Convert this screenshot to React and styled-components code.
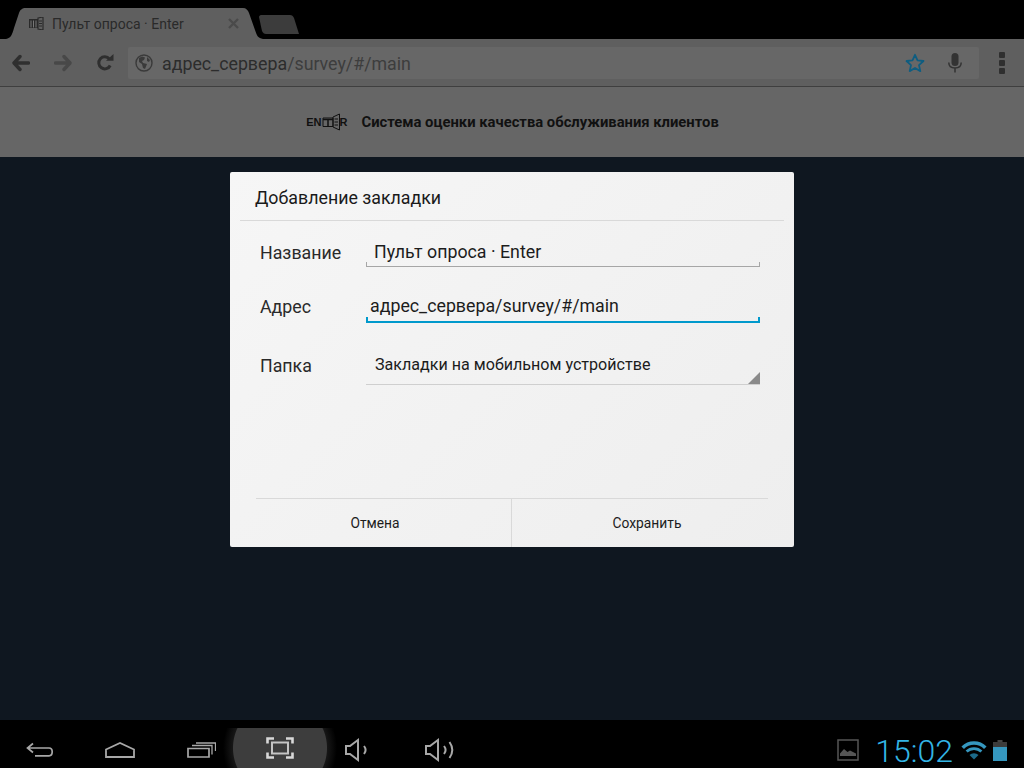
import React from 'react';
import styled, { createGlobalStyle } from 'styled-components';

const GlobalStyle = createGlobalStyle`
  html, body {
    margin: 0;
    padding: 0;
    background: #000;
  }
  * {
    box-sizing: border-box;
  }
`;

const Screen = styled.div`
  width: 1024px;
  height: 768px;
  display: flex;
  flex-direction: column;
  overflow: hidden;
  font-family: Roboto, "Liberation Sans", sans-serif;
  background: #0f1720;
`;

const TabStrip = styled.div`
  height: 39px;
  flex: none;
  background: #000;
  display: flex;
  align-items: flex-end;
`;

const Tab = styled.div`
  width: 263px;
  height: 31px;
  flex: none;
  background: #5f5f5f;
  clip-path: path('M6 31 C11 30 12 27 14 20 L19 5 C20 2 22 0 26 0 L243 0 C246 0 248 2 249 5 L255 22 C257 28 258 30 263 31 Z');
  display: flex;
  align-items: center;
  padding: 0 0 0 28px;
  color: #2a2a2a;
  font-size: 14px;
`;

const TabTitle = styled.span`
  margin-left: 8px;
  width: 176px;
  white-space: nowrap;
`;

const NewTab = styled.div`
  width: 41px;
  height: 19px;
  margin: 0 0 5px -4px;
  background: #3c3c3c;
  clip-path: path('M0 2 C0 1 1 0 2 0 L31 0 C33 0 34 1 35 3 L40 19 L7 19 C5 19 4 18 3 16 Z');
`;

const Toolbar = styled.div`
  height: 48px;
  flex: none;
  background: #5f5f5f;
  border-bottom: 1px solid #3f3f3f;
  display: flex;
  align-items: center;
  padding: 0 0 0 12px;
`;

const NavButton = styled.div`
  width: ${(props) => props.$w}px;
  flex: none;
  display: flex;
  align-items: center;
`;

const AddressBar = styled.div`
  width: 851px;
  height: 32px;
  flex: none;
  margin: 1px 0 0 0;
  background: #676767;
  border-radius: 2px;
  display: flex;
  align-items: center;
  padding: 0 17px 0 7px;
`;

const AddressText = styled.span`
  flex: 1;
  margin-left: 9px;
  padding-top: 1px;
  font-size: 17.8px;
  color: #2c2c2c;
  white-space: nowrap;
`;

const AddressDim = styled.span`
  color: #3d3d3d;
`;

const MenuDots = styled.div`
  margin-left: 20px;
  display: flex;
  flex-direction: column;
  gap: 2px;
`;

const MenuDot = styled.i`
  display: block;
  width: 6px;
  height: 6px;
  background: #2f2f2f;
  border-radius: 1px;
`;

const PageHeader = styled.div`
  height: 70px;
  flex: none;
  background: #666;
  display: flex;
  align-items: center;
  justify-content: center;
  gap: 14px;
  padding: 0 0 1px 1px;
`;

const Logo = styled.div`
  display: flex;
  align-items: center;
  font-family: "Liberation Sans", sans-serif;
  font-weight: 700;
  font-size: 11px;
  color: #111;
`;

const HeaderTitle = styled.div`
  font-size: 14.8px;
  font-weight: 700;
  color: #111;
  white-space: nowrap;
`;

const Content = styled.div`
  flex: 1;
  background: #0f1720;
  padding: 15px 0 0 230px;
`;

const Dialog = styled.div`
  width: 564px;
  height: 375px;
  background: linear-gradient(135deg, #f6f6f6, #eeeeee);
  border-radius: 2px;
  display: flex;
  flex-direction: column;
`;

const DialogTitle = styled.div`
  height: 49px;
  flex: none;
  margin: 0 10px;
  padding: 2px 0 0 15px;
  border-bottom: 1px solid #d9d9d9;
  display: flex;
  align-items: center;
  font-size: 17.8px;
  color: #1a1a1a;
`;

const Form = styled.div`
  flex: 1;
  padding: 3px 34px 0 30px;
  display: flex;
  flex-direction: column;
`;

const Row = styled.div`
  height: ${(props) => props.$h}px;
  flex: none;
  display: flex;
  align-items: center;
`;

const Label = styled.div`
  width: 106px;
  flex: none;
  font-size: 17.8px;
  color: #2a2a2a;
`;

const Field = styled.div`
  position: relative;
  flex: 1;
  height: ${(props) => (props.$focus ? 32 : 30)}px;
  display: flex;
  align-items: center;
  padding-left: ${(props) => props.$pad}px;
  font-size: 17.8px;
  color: #1c1c1c;
  white-space: nowrap;
  border-bottom: ${(props) => (props.$focus ? '2px solid #0099cc' : '1px solid #a6a6a6')};
  &::before,
  &::after {
    content: '';
    position: absolute;
    bottom: 0;
    width: ${(props) => (props.$focus ? 2 : 1)}px;
    height: 4px;
    background: ${(props) => (props.$focus ? '#0099cc' : '#a6a6a6')};
  }
  &::before {
    left: 0;
  }
  &::after {
    right: 0;
  }
`;

const Select = styled.div`
  position: relative;
  flex: 1;
  height: 40px;
  display: flex;
  align-items: center;
  padding: 0 0 0 9px;
  font-size: 16.1px;
  color: #1c1c1c;
  border-bottom: 1px solid #cfcfcf;
  &::after {
    content: '';
    position: absolute;
    right: 0;
    bottom: 0;
    border-style: solid;
    border-width: 0 0 12px 12px;
    border-color: transparent transparent #8a8a8a transparent;
  }
`;

const Footer = styled.div`
  height: 49px;
  flex: none;
  margin: 0 26px 0 26px;
  border-top: 1px solid #d9d9d9;
  display: flex;
`;

const FooterButton = styled.div`
  flex: ${(props) => (props.$first ? '0 0 256px' : '1')};
  display: flex;
  align-items: center;
  justify-content: center;
  padding: ${(props) => (props.$first ? '0 17px 0 0' : '0 0 0 14px')};
  font-size: 13.8px;
  color: #1c1c1c;
  border-right: ${(props) => (props.$first ? '1px solid #d9d9d9' : 'none')};
`;

const SystemBar = styled.div`
  height: 48px;
  flex: none;
  background: #000;
  display: flex;
  align-items: center;
  padding: 12px 0 0 26px;
`;

const SysIcon = styled.div`
  width: ${(props) => props.$w}px;
  flex: none;
  display: flex;
  align-items: center;
`;

const HighlightButton = styled.div`
  width: 114px;
  height: 40px;
  align-self: flex-end;
  margin-right: 8px;
  flex: none;
  background: radial-gradient(circle at 57px 20px, #3d3d3d 0, #3d3d3d 46.5px, #161616 47.5px, #000 57px);
  display: flex;
  align-items: center;
  justify-content: center;
`;

const StatusArea = styled.div`
  margin-left: auto;
  display: flex;
  align-items: center;
  padding-right: 17px;
`;

const Clock = styled.div`
  font-size: 32px;
  font-weight: 300;
  color: #33b5e5;
  margin: 2px 8px 0 16px;
  line-height: 1;
`;

const FavIcon = () => (
  <svg width="16" height="13" viewBox="0 0 16 13" fill="none">
    <path d="M1 2h9v9H1z" fill="#2a2a2a" />
    <path d="M3 3.500v7M5.500 3.500v7M8 3.500v7" stroke="#777" strokeWidth="1" />
    <path d="M10 1l5-1v13l-5-1z" fill="none" stroke="#2a2a2a" strokeWidth="1.200" />
    <path d="M11 4h3M11 6.500h3M11 9h3" stroke="#2a2a2a" strokeWidth="1" />
  </svg>
);

const CloseIcon = () => (
  <svg width="11" height="11" viewBox="0 0 11 11">
    <path d="M1 1l9 9M10 1l-9 9" stroke="#4a4a4a" strokeWidth="2.400" />
  </svg>
);

const ArrowIcon = ({ color, flip }) => (
  <svg width="18" height="18" viewBox="0 0 18 18" style={flip ? { transform: 'scaleX(-1)' } : undefined}>
    <path d="M8 2.500L2 9l6 6.500M3 9h13.500" fill="none" stroke={color} strokeWidth="3.400" strokeLinecap="round" strokeLinejoin="round" />
  </svg>
);

const ReloadIcon = () => (
  <svg width="18" height="18" viewBox="0 0 18 18">
    <path d="M14.200 11.500A6 6 0 1 1 13.400 5" fill="none" stroke="#2f2f2f" strokeWidth="3" />
    <path d="M10 6.800h7.500V0z" fill="#2f2f2f" />
  </svg>
);

const GlobeIcon = () => (
  <svg width="18" height="18" viewBox="0 0 18 18">
    <circle cx="9" cy="9" r="8" fill="none" stroke="#3a3a3a" strokeWidth="1.400" />
    <path d="M4 4l3-1.500 3 1-1 2.500-2 1 1 2 4 1-2 5-2-1-1-4-3-2zM12 3l3 3-1 2-2-1z" fill="#3a3a3a" />
  </svg>
);

const StarIcon = () => (
  <svg width="20" height="20" viewBox="0 0 20 20">
    <path d="M10 1.800l2.500 5.600 6 .6-4.500 4.100 1.300 6-5.300-3.100-5.300 3.100 1.300-6L1.500 8l6-.6z" fill="none" stroke="#0f5d80" strokeWidth="1.800" strokeLinejoin="round" />
  </svg>
);

const MicIcon = () => (
  <svg width="14" height="20" viewBox="0 0 14 20">
    <rect x="3.500" y="0" width="7" height="13" rx="3.500" fill="#333" />
    <path d="M.8 9.500c0 4 2.500 5.500 6.200 5.500s6.200-1.500 6.200-5.500M7 15v4.500" fill="none" stroke="#333" strokeWidth="1.500" />
  </svg>
);

const LogoMark = () => (
  <svg width="18" height="18" viewBox="0 0 18 18" fill="none">
    <path d="M1 5h10v8.500H1z" stroke="#111" strokeWidth="1" />
    <path d="M1 6.500h10M6 6.500v7" stroke="#111" strokeWidth="1.500" />
    <path d="M11 4L17.500 1v16L11 14z" stroke="#111" strokeWidth="1" />
    <path d="M12.500 6h3.500M12.500 9h3.500M12.500 12h3.500" stroke="#111" strokeWidth="1.200" />
  </svg>
);

const BackIcon = () => (
  <svg width="28" height="16" viewBox="0 0 28 16" fill="none" stroke="#a8a8a8" strokeWidth="1.700">
    <path d="M7 1.500L1.500 6 7 10.500M2 6h21c2.500 0 3.200 2 3.200 3.800 0 2-1 4-3.200 4H9" />
  </svg>
);

const HomeIcon = () => (
  <svg width="30" height="16" viewBox="0 0 30 16" fill="none" stroke="#a8a8a8" strokeWidth="1.800">
    <path d="M1 7.500L15 1l14 6.500V15H1z" />
  </svg>
);

const RecentIcon = () => (
  <svg width="29" height="16" viewBox="0 0 29 16" fill="none" stroke="#a8a8a8" strokeWidth="1.700">
    <path d="M1 6.500h21v8.500H1z" />
    <path d="M5 3.500h20v9M9 1h19.500v8" strokeWidth="1.300" />
  </svg>
);

const ScreenshotIcon = () => (
  <svg width="28" height="22" viewBox="0 0 28 22" fill="none" stroke="#d8d8d8">
    <path d="M8 1.500H1.500v5M20 1.500h6.500v5M8 20.500H1.500v-5M20 20.500h6.500v-5" strokeWidth="2.600" />
    <rect x="6" y="5.500" width="16" height="11" strokeWidth="2" stroke="#c4c4c4" />
  </svg>
);

const VolumeIcon = ({ loud }) => (
  <svg width="29" height="24" viewBox="0 0 29 24" fill="none" stroke="#a8a8a8" strokeWidth="2">
    <path d="M1 8h4L13 2v20l-8-6H1z" />
    <path d="M19 8c2 2.500 2 5.500 0 8" />
    {loud && <path d="M24.500 4c3.500 5 3.500 11 0 16" />}
  </svg>
);

const PictureIcon = () => (
  <svg width="22" height="22" viewBox="0 0 22 22">
    <rect x="1" y="1" width="20" height="20" fill="none" stroke="#555" strokeWidth="1.500" />
    <path d="M3 17v-2.500l4-4.500 3.500 3 2.500-1.500 6 3V17z" fill="#555" />
  </svg>
);

const WifiIcon = () => (
  <svg width="26" height="19" viewBox="0 0 26 19" fill="none">
    <path d="M1.700 6.700a16 16 0 0 1 22.600 0" stroke="#3597bf" strokeWidth="3.600" />
    <path d="M5.600 10.600a10.500 10.500 0 0 1 14.800 0" stroke="#3597bf" strokeWidth="2.800" />
    <path d="M13 18.500L8.500 14a6.400 6.400 0 0 1 9 0z" fill="#1c6a8a" />
  </svg>
);

const BatteryIcon = () => (
  <svg width="14" height="21" viewBox="0 0 14 21" style={{ marginLeft: 6 }}>
    <rect x="4.500" y="0" width="5" height="2" fill="#444" />
    <rect x="0" y="2" width="14" height="5" fill="#3c3c3c" />
    <rect x="0" y="7" width="14" height="14" fill="#3597bf" />
  </svg>
);

export default function App() {
  return (
    <>
      <GlobalStyle />
      <Screen>
        <TabStrip>
          <Tab>
            <FavIcon />
            <TabTitle>Пульт опроса · Enter</TabTitle>
            <CloseIcon />
          </Tab>
          <NewTab />
        </TabStrip>
        <Toolbar>
          <NavButton $w={42}><ArrowIcon color="#2f2f2f" /></NavButton>
          <NavButton $w={42}><ArrowIcon color="#484848" flip /></NavButton>
          <NavButton $w={32}><ReloadIcon /></NavButton>
          <AddressBar>
            <GlobeIcon />
            <AddressText>адрес_сервера<AddressDim>/survey/#/main</AddressDim></AddressText>
            <NavButton $w={43}><StarIcon /></NavButton>
            <MicIcon />
          </AddressBar>
          <MenuDots>
            <MenuDot />
            <MenuDot />
            <MenuDot />
          </MenuDots>
        </Toolbar>
        <PageHeader>
          <Logo>EN<LogoMark />R</Logo>
          <HeaderTitle>Система оценки качества обслуживания клиентов</HeaderTitle>
        </PageHeader>
        <Content>
          <Dialog>
            <DialogTitle>Добавление закладки</DialogTitle>
            <Form>
              <Row $h={56}>
                <Label>Название</Label>
                <Field $pad={8}>Пульт опроса · Enter</Field>
              </Row>
              <Row $h={53}>
                <Label>Адрес</Label>
                <Field $pad={4} $focus>адрес_сервера/survey/#/main</Field>
              </Row>
              <Row $h={64}>
                <Label>Папка</Label>
                <Select>Закладки на мобильном устройстве</Select>
              </Row>
            </Form>
            <Footer>
              <FooterButton $first>Отмена</FooterButton>
              <FooterButton>Сохранить</FooterButton>
            </Footer>
          </Dialog>
        </Content>
        <SystemBar>
          <SysIcon $w={79}><BackIcon /></SysIcon>
          <SysIcon $w={82}><HomeIcon /></SysIcon>
          <SysIcon $w={36}><RecentIcon /></SysIcon>
          <HighlightButton><ScreenshotIcon /></HighlightButton>
          <SysIcon $w={80}><VolumeIcon /></SysIcon>
          <SysIcon $w={40}><VolumeIcon loud /></SysIcon>
          <StatusArea>
            <PictureIcon />
            <Clock>15:02</Clock>
            <WifiIcon />
            <BatteryIcon />
          </StatusArea>
        </SystemBar>
      </Screen>
    </>
  );
}
